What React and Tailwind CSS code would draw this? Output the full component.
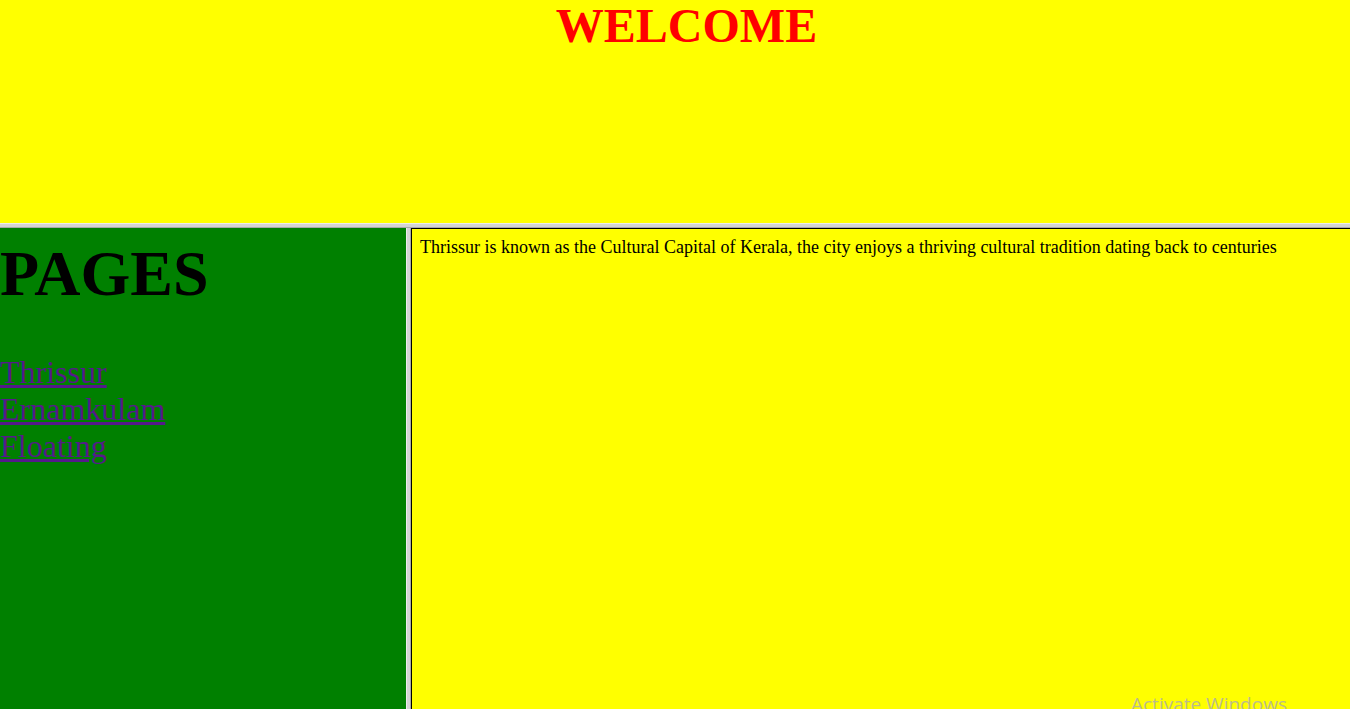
export default function App() {
  return (
    <div
      className="relative h-[709px] w-full flex flex-col overflow-hidden"
      style={{ fontFamily: '"Liberation Serif", "Times New Roman", serif' }}
    >
      {/* top frame */}
      <div className="h-[223px] bg-[#ffff00] flex justify-center pl-[23px]">
        <h1 className="text-[48px] leading-[52px] font-bold text-[#ff0000]">WELCOME</h1>
      </div>

      {/* horizontal frame border */}
      <div className="h-[5px] bg-[#d4d4d4] border-t border-t-[#ececec] border-b border-b-[#a8a8a8]" />

      <div className="flex flex-1 min-h-0">
        {/* left frame */}
        <div className="w-[406px] bg-[#008000] pt-[9px]">
          <h1 className="text-[64px] leading-[73px] font-bold text-black">PAGES</h1>
          <div className="mt-[44px] flex flex-col text-[32px] leading-[37px]">
            <a href="#" className="text-[#551a8b] underline w-fit">Thrissur</a>
            <a href="#" className="text-[#551a8b] underline w-fit">Ernamkulam</a>
            <a href="#" className="text-[#551a8b] underline w-fit">Floating</a>
          </div>
        </div>

        {/* vertical frame border */}
        <div className="w-[5px] bg-[#d4d4d4] border-l border-l-[#ececec] border-r border-r-[#a8a8a8]" />

        {/* right frame */}
        <div className="flex-1 bg-[#ffff00] border-t border-l border-t-black border-l-black p-[8px]">
          <p className="text-[18px] leading-[21px] text-black">
            Thrissur is known as the Cultural Capital of Kerala, the city enjoys a thriving cultural tradition dating back to centuries
          </p>
        </div>
      </div>

      <div
        className="absolute left-[1131px] top-[692px] text-[19px] leading-[24px] text-[#bcbc8c] whitespace-nowrap"
        style={{ fontFamily: '"Open Sans", "Noto Sans", sans-serif' }}
      >
        Activate Windows
      </div>
    </div>
  );
}
